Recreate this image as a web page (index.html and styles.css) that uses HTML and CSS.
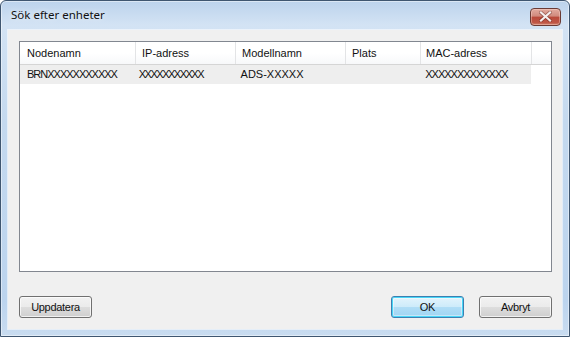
FILE: index.html
```html
<!DOCTYPE html>
<html>
<head lang="sv">
    <meta charset="UTF-8">
    <title>Sök efter enheter</title>
    <link rel="stylesheet" href="styles.css">
</head>
<body>

<div class="window">

    <div class="title-bar">
        <span class="title-text">Sök efter enheter</span>
        <a class="close-btn" href="javascript:void(0);">
            <svg width="13" height="11" viewBox="0 0 13 11">
                <path d="M2 1.5 L11 9.5 M11 1.5 L2 9.5" stroke="#5a1d15" stroke-width="3.6" stroke-linecap="square" fill="none" opacity="0.5"/>
                <path d="M2 1.5 L11 9.5 M11 1.5 L2 9.5" stroke="#f4eeee" stroke-width="2.2" stroke-linecap="square" fill="none"/>
            </svg>
        </a>
    </div>

    <div class="client">

        <div class="device-list">
            <div class="list-head">
                <div class="col col-node">Nodenamn</div>
                <div class="col col-ip">IP-adress</div>
                <div class="col col-model">Modellnamn</div>
                <div class="col col-place">Plats</div>
                <div class="col col-mac">MAC-adress</div>
                <div class="col col-rest"></div>
            </div>
            <div class="list-row">
                <div class="col col-node cell-x">BRNXXXXXXXXXXX</div>
                <div class="col col-ip cell-x cell-ip">XXXXXXXXXXX</div>
                <div class="col col-model">ADS-XXXXX</div>
                <div class="col col-place"></div>
                <div class="col col-mac cell-x">XXXXXXXXXXXXX</div>
            </div>
        </div>

        <div class="button-row">
            <a class="btn" href="javascript:void(0);">Uppdatera</a>
            <div class="spacer"></div>
            <a class="btn btn-default" href="javascript:void(0);">OK</a>
            <a class="btn" href="javascript:void(0);">Avbryt</a>
        </div>

    </div>
</div>

</body>
</html>
```

FILE: styles.css
```css
* {
    padding: 0px;
    margin: 0px;
    box-sizing: border-box;
}

body {
    background: #ffffff;
    font-family: "Liberation Sans", Arial, sans-serif;
}

a {
    text-decoration: none;
    color: #000000;
}

.window {
    width: 570px;
    height: 337px;
    border: 1px solid #3f5670;
    border-radius: 6px 6px 0px 0px;
    background: linear-gradient(#bcd3ec, #d3e3f4 24px, #c4d9ef 120px, #bcd4ee 300px, #c9dcf0);
    box-shadow: inset 0px 0px 0px 1px rgba(255, 255, 255, 0.45);
    display: flex;
    flex-direction: column;
}

.title-bar {
    height: 29px;
    display: flex;
    align-items: center;
    padding: 0px 10px 2px 10px;
}

.title-text {
    font-family: "Noto Sans", "Open Sans", sans-serif;
    font-size: 11.5px;
    color: #111111;
    flex: 1;
    text-shadow: 0px 0px 6px rgba(255, 255, 255, 0.9);
}

.close-btn {
    width: 31px;
    height: 18px;
    margin-right: -2px;
    margin-top: 4px;
    border: 1px solid #6a3b35;
    border-radius: 4px;
    background: linear-gradient(#e2aa9f, #d08a7d 45%, #b9493a 50%, #bf5747 85%, #d08470);
    box-shadow: inset 0px 0px 0px 1px rgba(255, 220, 210, 0.4);
    display: flex;
    align-items: center;
    justify-content: center;
}

.client {
    flex: 1;
    margin: 0px 7px 7px 7px;
    background: #f0f0f0;
    box-shadow: 0px 0px 0px 1px rgba(255, 255, 255, 0.55);
    padding: 11px 10px 11px 11px;
    display: flex;
    flex-direction: column;
}

.device-list {
    height: 231px;
    border: 1px solid #828790;
    background: #ffffff;
    font-size: 11px;
    color: #111111;
}

.list-head {
    display: flex;
    height: 23px;
    border-bottom: 1px solid #d5d5d5;
    background: linear-gradient(#ffffff, #ffffff 50%, #f7f8fa);
}

.list-head .col {
    line-height: 22px;
    border-right: 1px solid #e3e4e6;
}

.list-head .col-rest {
    flex: 1;
    border-right: none;
}

.col {
    padding-left: 6px;
    white-space: nowrap;
    overflow: hidden;
}

.col-node {
    width: 116px;
    padding-left: 7px;
}

.col-ip {
    width: 100px;
}

.col-model {
    width: 110px;
}

.col-place {
    width: 75px;
}

.col-mac {
    width: 111px;
    padding-left: 5px;
}

.list-row {
    display: flex;
    width: 511px;
    height: 19px;
    line-height: 19px;
    background: #eeeeee;
}

.list-row .col-model {
    padding-left: 5px;
}

.cell-x {
    letter-spacing: -1px;
}

.cell-ip {
    padding-left: 3px;
    letter-spacing: -1.5px;
}

.button-row {
    display: flex;
    margin-top: 24px;
    gap: 15px;
}

.spacer {
    flex: 1;
}

.btn {
    width: 73px;
    height: 22px;
    border: 1px solid #707070;
    border-radius: 3px;
    background: linear-gradient(#f2f2f2, #ebebeb 50%, #dddddd 51%, #cfcfcf);
    box-shadow: inset 0px 0px 0px 1px rgba(255, 255, 255, 0.7);
    font-size: 11px;
    line-height: 20px;
    text-align: center;
    letter-spacing: -0.3px;
    color: #111111;
}

.btn-default {
    border-color: #3c7fb1;
    background: linear-gradient(#e3f4fc, #cdebfa 50%, #b0ddf6 51%, #9fd5f3);
    box-shadow: inset 0px 0px 0px 1px #48d6f7, inset 0px 0px 0px 2px rgba(255, 255, 255, 0.4);
}
```
